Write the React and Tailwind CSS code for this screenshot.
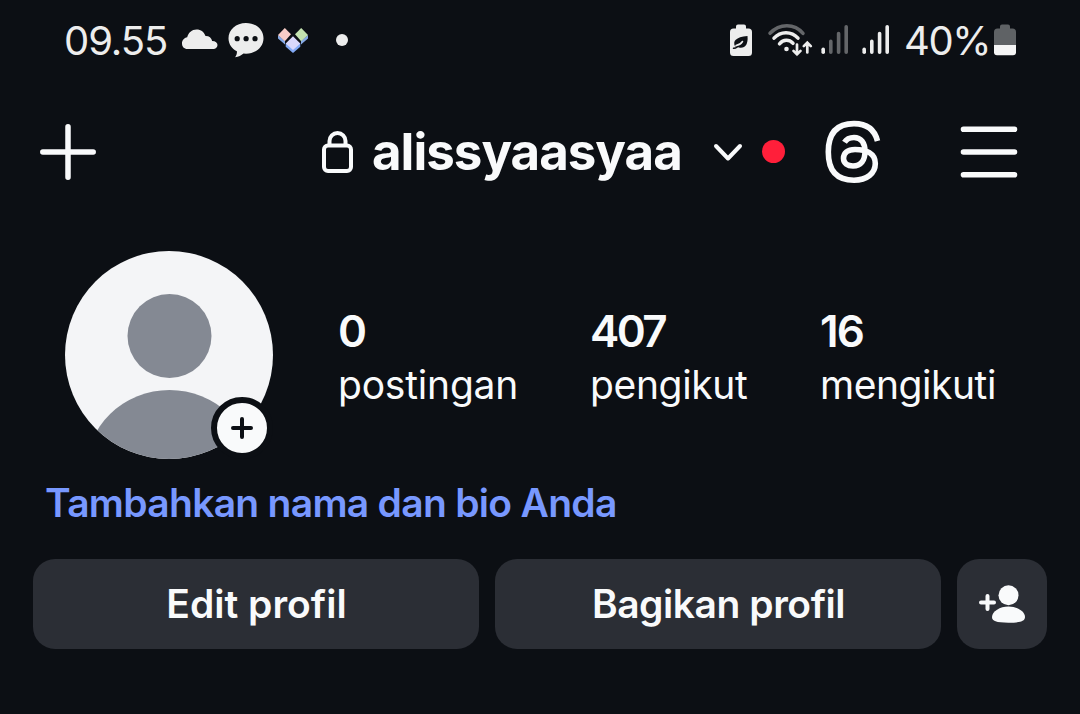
import { clsx } from 'clsx'

const stats = [
  { value: '0', label: 'postingan', width: 'w-[252px]', valueTracking: 'tracking-normal', labelTracking: 'tracking-[-0.2px]' },
  { value: '407', label: 'pengikut', width: 'w-[230px]', valueTracking: 'tracking-[-2.6px]', labelTracking: 'tracking-[-0.35px]' },
  { value: '16', label: 'mengikuti', width: 'w-[220px]', valueTracking: 'tracking-[-1.8px]', labelTracking: 'tracking-[-0.45px]' },
]

const Signal = ({ dim, className }) => (
  <svg viewBox="0 0 28 32" className={clsx('h-8 w-7 shrink-0', className)} fill="none" strokeWidth="3.6" strokeLinecap="round">
    <path d="M2.2 25.2v3" stroke="#ededed" />
    <path d="M9.8 17.2v11M17.6 9.5v18.7M25.2 2.8v25.4" stroke={dim ? '#646669' : '#ededed'} />
  </svg>
)

const StatusBar = () => (
  <div className="flex h-20 items-center pl-16 text-[40px] leading-none font-[380] text-[#ededed]">
    <span className="w-[118px] shrink-0 whitespace-nowrap pt-px tracking-[-1.1px]">09.55</span>
    <svg viewBox="0 0 36 20" className="mb-0.5 h-5 w-9 shrink-0" fill="#ededed">
      <path d="M5.500 20C2 20 0 17.500 0 14.500 0 11.500 2 8.800 5.200 8.300 6.200 3.500 10 .4 14.500.4c4.500 0 7.800 2.600 9 6.700 3.300-.2 6 1.700 6.700 5 3.300.2 5.300 1.600 5.300 4 0 2.400-1.700 3.900-4.200 3.900z" />
    </svg>
    <svg viewBox="0 0 36 36" className="ml-2.5 h-9 w-9 shrink-0">
      <path d="M18 1c10 0 17.500 6.600 17.500 15.300S28 31.700 18 31.700l-2.500-.2c-2.200 2-4.900 3.300-8.400 3.800 1.400-1.900 2-3.800 1.800-6C3.800 26.600.5 22 .5 16.300.5 7.600 8 1 18 1z" fill="#ededed" />
      <g fill="#0c0f14">
        <circle cx="9.200" cy="16.700" r="2.600" />
        <circle cx="18.100" cy="16.700" r="2.600" />
        <circle cx="27" cy="16.700" r="2.600" />
      </g>
    </svg>
    <svg viewBox="0 0 32 26" className="ml-[13px] h-[26px] w-8 shrink-0">
      <path d="M1 8v3.500l7 6V14zM31 8v3.500l-7 6V14z" fill="#86a9e6" />
      <path d="M8.700 16.500v3.300L16 26l7.300-6.200v-3.300z" fill="#83a9f5" />
      <path d="M7.800 1l6.200 6.300-6.200 7L1 8z" fill="#f9cdc7" />
      <path d="M24.200 1L31 8l-6.800 6.300-6.200-7z" fill="#c4e3b0" />
      <path d="M16 9.300l7.300 7.200-7.300 6.500-7.300-6.500z" fill="#d9d7fb" />
    </svg>
    <span className="ml-[27px] size-3 shrink-0 rounded-full bg-[#ededed]" />
    <svg viewBox="0 0 22 32" className="ml-[382px] h-8 w-[22px] shrink-0">
      <path d="M8 .5h6q2 0 2 2v2h2.500q3.500 0 3.500 3.500v20.500q0 3.500-3.500 3.500h-15Q0 32 0 28.500V8q0-3.500 3.500-3.500H6v-2q0-2 2-2z" fill="#ededed" />
      <path d="M5 22.300c-2.500-5 .5-9.300 12.500-10.300.8 8.500-2.500 12.600-8.500 11.500z" fill="#0c0f14" />
      <path d="M3.500 24.200c3 .3 5-2 6.300-3.800" stroke="#0c0f14" strokeWidth="1.500" fill="none" strokeLinecap="round" />
      <path d="M6 21.500c3-.4 5-1.600 6.500-4" stroke="#ededed" strokeWidth="1.500" fill="none" strokeLinecap="round" />
    </svg>
    <svg viewBox="0 0 46 34" className="ml-[15px] h-[34px] w-[46px] shrink-0" fill="none" stroke="#ededed" strokeWidth="3.500" strokeLinecap="round">
      <path d="M3 10.300C12.500.2 27.500.2 36 10.300" stroke="#646669" />
      <path d="M7 15.200C13.500 7.800 24.500 7.800 31 15.200M12.500 20.800c4-4.500 9.500-4.500 13.500-.5" />
      <circle cx="19.500" cy="26" r="2.300" fill="#ededed" stroke="none" />
      <path d="M30 21.500v9.700m-3.500-3.300l3.500 3.500 3.500-3.500M40.300 29.500v-9.700m-3.500 3.300l3.500-3.500 3.500 3.500" strokeWidth="2.700" />
    </svg>
    <Signal dim className="ml-2" />
    <Signal className="ml-[13px]" />
    <span className="ml-[14px] w-[90px] shrink-0 whitespace-nowrap pt-px tracking-[-1.4px]">40%</span>
    <svg viewBox="0 0 22 32" className="h-8 w-[22px] shrink-0">
      <path d="M8 .5h6q2 0 2 2v2h2.500q3.500 0 3.500 3.500v13.500H0V8q0-3.500 3.500-3.500H6v-2q0-2 2-2z" fill="#5f6265" />
      <path d="M0 21h22v7.200q0 3-3 3H3q-3 0-3-3z" fill="#f5f5f5" />
    </svg>
  </div>
)

const Header = () => (
  <header className="flex h-36 items-center pl-10 text-[#f9fafb]">
    <svg viewBox="0 0 56 56" className="size-14 shrink-0" stroke="currentColor" strokeWidth="5.500" strokeLinecap="round">
      <path d="M28 2.800v50.400M2.800 28h50.400" />
    </svg>
    <svg viewBox="0 0 34 44" className="ml-[224px] h-11 w-[34px] shrink-0" fill="none" stroke="currentColor" strokeWidth="4">
      <rect x="4" y="15.500" width="27" height="25.500" rx="4" />
      <path d="M9.500 15.500V11a8 8 0 0 1 16 0v4.500" />
    </svg>
    <h1 className="ml-[18px] w-[340px] shrink-0 pb-px text-[51px] leading-none font-[680] tracking-[-1px]">alissyaasyaa</h1>
    <svg viewBox="0 0 32 20" className="h-5 w-8 shrink-0" fill="none" stroke="currentColor" strokeWidth="4" strokeLinecap="round" strokeLinejoin="round">
      <path d="M4 4l12 12.500L28 4" />
    </svg>
    <span className="mb-0.5 ml-[18px] size-[23px] shrink-0 rounded-full bg-[#ff1f3a]" />
    <svg viewBox="0 0 70 75" className="ml-[35px] h-[75px] w-[70px] shrink-0" fill="none" stroke="currentColor" strokeWidth="5.600">
      <path d="M57.500 26C54.500 14 46 8.600 34 8.600 17 8.600 8.300 18 8.300 37S17 65.200 34 65.200c13 0 21.300-7 21.300-16.700C55.300 38 46 34.500 35 34.500c-7.500 0-11.500 3.500-11.500 8.800 0 5 4 7.700 9.500 7.700 8 0 12-6 12-14.500S41 22.500 34 22.500c-4.500 0-7.500 1.500-9.500 4.700" />
    </svg>
    <svg viewBox="0 0 58 52" className="ml-[70px] h-[52px] w-[58px] shrink-0" stroke="currentColor" strokeWidth="5.600" strokeLinecap="round">
      <path d="M3.500 3.300h51M3.500 26h51M3.500 48.700h51" />
    </svg>
  </header>
)

const Avatar = () => (
  <div className="relative size-52 shrink-0">
    <div className="size-full overflow-hidden rounded-full bg-[#f4f5f7]">
      <svg viewBox="0 0 208 208" className="size-full" fill="#848993">
        <circle cx="104.500" cy="85" r="42" />
        <ellipse cx="104.500" cy="221" rx="84" ry="82" />
      </svg>
    </div>
    <span className="absolute top-[146px] left-[146px] flex size-[62px] items-center justify-center rounded-full border-[6px] border-[#0c0f14] bg-[#f9fafb]">
      <svg viewBox="0 0 22 22" className="size-[22px]" stroke="#0c0f14" strokeWidth="4" strokeLinecap="round">
        <path d="M11 2v18M2 11h18" />
      </svg>
    </span>
  </div>
)

const Stat = ({ stat }) => (
  <div className={clsx('shrink-0 whitespace-nowrap', stat.width)}>
    <div className={clsx('h-[54px] text-[44px] leading-[54px] font-semibold', stat.valueTracking)}>{stat.value}</div>
    <div className={clsx('h-[54px] text-[39px] leading-[54px]', stat.labelTracking)}>{stat.label}</div>
  </div>
)

const ActionButton = ({ children, className }) => (
  <button
    className={clsx(
      'flex h-[90px] items-center justify-center rounded-[22px] bg-[#2b2e35] text-[39px] font-[580] whitespace-nowrap',
      className
    )}>
    {children}
  </button>
)

const App = () => {
  return (
    <main className="h-[714px] w-[1080px] overflow-hidden bg-[#0c0f14] font-['Inter',sans-serif] text-[#f9fafb]">
      <StatusBar />
      <Header />
      <section className="flex pt-[27px] pl-[65px]">
        <Avatar />
        <div className="flex pt-[53px] pl-[65px]">
          {stats.map((stat) => (
            <Stat key={stat.label} stat={stat} />
          ))}
        </div>
      </section>
      <a className="mt-[19px] block h-[50px] pl-[45px] text-[39px] leading-[50px] font-[560] tracking-[-0.71px] whitespace-nowrap text-[#7898ff]">
        Tambahkan nama dan bio Anda
      </a>
      <div className="mt-[31px] flex gap-4 px-[33px]">
        <ActionButton className="w-[446px] pl-px">Edit profil</ActionButton>
        <ActionButton className="w-[446px] pl-px tracking-[-0.45px]">Bagikan profil</ActionButton>
        <ActionButton className="w-[90px]">
          <svg viewBox="0 0 48 40" className="h-10 w-12" fill="currentColor">
            <circle cx="30.500" cy="11.200" r="10" />
            <path d="M30.500 22.500c8.500 0 16.500 5 16.500 10.500 0 4-4 5.700-16.500 5.700S14 37 14 33c0-5.500 8-10.500 16.500-10.500z" />
            <path d="M9.500 12v13M3 18.500h13" stroke="currentColor" strokeWidth="4" strokeLinecap="round" />
          </svg>
        </ActionButton>
      </div>
    </main>
  )
}

export default App
